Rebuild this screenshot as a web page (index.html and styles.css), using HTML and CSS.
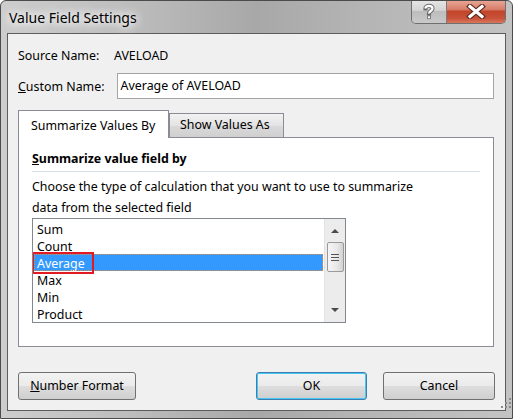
FILE: index.html
```html
<!DOCTYPE html>
<html>
<head>
<meta charset="utf-8">
<link rel="stylesheet" href="styles.css">
</head>
<body>
<div class="window">
  <div class="titlebar">
    <span class="title">Value Field Settings</span>
    <div class="caption-btns">
      <div class="cap-btn help">
        <svg width="14" height="17" viewBox="0 0 14 17"><path d="M3.5 5.5 C3.5 2 10.5 2 10.5 5.5 C10.5 8 7 8 7 10.5" fill="none" stroke="#6b6b6b" stroke-width="4.2" stroke-linecap="square"/><path d="M3.5 5.5 C3.5 2 10.5 2 10.5 5.5 C10.5 8 7 8 7 10.5" fill="none" stroke="#fff" stroke-width="2.2"/><rect x="5.2" y="12.5" width="3.6" height="3.6" fill="#6b6b6b"/><rect x="6" y="13.3" width="2" height="2" fill="#fff"/></svg>
      </div>
      <div class="cap-btn close">
        <svg width="20" height="15" viewBox="0 0 20 15"><path d="M4 2.5 L16 12.5 M16 2.5 L4 12.5" stroke="#5a2418" stroke-width="5.4" stroke-linecap="square"/><path d="M4 2.5 L16 12.5 M16 2.5 L4 12.5" stroke="#fff" stroke-width="3.2" stroke-linecap="square"/></svg>
      </div>
    </div>
  </div>
  <div class="client">
    <div class="row source">
      <span class="label">Source Name:</span>
      <span class="value">AVELOAD</span>
    </div>
    <div class="row custom">
      <span class="label"><u>C</u>ustom Name:</span>
      <div class="input">Average of AVELOAD</div>
    </div>
    <div class="tabs">
      <div class="tab active">Summarize Values By</div>
      <div class="tab">Show Values As</div>
    </div>
    <div class="panel">
      <div class="heading"><u>S</u>ummarize value field by</div>
      <p class="desc">Choose the type of calculation that you want to use to summarize<br>data from the selected field</p>
      <div class="listbox">
        <ul class="items">
          <li>Sum</li>
          <li>Count</li>
          <li class="selected">Average</li>
          <li>Max</li>
          <li>Min</li>
          <li>Product</li>
        </ul>
        <div class="scrollbar">
          <div class="arrow up"></div>
          <div class="thumb"><span></span><span></span><span></span></div>
          <div class="track"></div>
          <div class="arrow down"></div>
        </div>
        <div class="highlight"></div>
      </div>
    </div>
    <div class="buttons">
      <div class="btn numfmt"><u>N</u>umber Format</div>
      <div class="right-btns">
        <div class="btn ok">OK</div>
        <div class="btn cancel">Cancel</div>
      </div>
    </div>
  </div>
  <div class="grip">
    <svg width="10" height="10" viewBox="0 0 10 10"><g fill="#8a8a8a"><rect x="8" y="0" width="2" height="2"/><rect x="8" y="4" width="2" height="2"/><rect x="8" y="8" width="2" height="2"/><rect x="4" y="4" width="2" height="2"/><rect x="4" y="8" width="2" height="2"/><rect x="0" y="8" width="2" height="2"/></g></svg>
  </div>
</div>
</body>
</html>
```

FILE: styles.css
```css
* { box-sizing: border-box; }
html, body { margin: 0; padding: 0; background: #ffffff; }
body { font-family: "Noto Sans", "Open Sans", sans-serif; font-size: 12.4px; color: #000; }

.window {
  position: relative;
  width: 513px;
  height: 419px;
  border: 1px solid #4b4b4b;
  border-radius: 6px 6px 0 0;
  background: linear-gradient(90deg, #cdcdcd 0%, #bdbdbd 25%, #a8a8a8 50%, #b4b4b4 70%, #c3c3c3 100%);
  overflow: hidden;
}

.titlebar {
  height: 32px;
  display: flex;
  align-items: flex-start;
  justify-content: space-between;
  position: relative;
}
.title {
  margin: 8px 0 0 8px;
  font-size: 14px;
  line-height: 18px;
  color: #000;
  text-shadow: 0 0 8px #fff, 0 0 10px #fff, 0 0 14px #f2f2f2;
}
.caption-btns {
  display: flex;
  margin-right: 6px;
  margin-top: -1px;
  border: 1px solid #6f6f6f;
  border-top: none;
  border-radius: 0 0 5px 5px;
  overflow: hidden;
  height: 24px;
}
.cap-btn {
  display: flex;
  align-items: center;
  justify-content: center;
}
.cap-btn.help {
  width: 35px;
  background: linear-gradient(#e6e6e6 0%, #d4d4d4 45%, #bdbdbd 50%, #c9c9c9 100%);
  border-right: 1px solid #7a7a7a;
}
.cap-btn.close {
  width: 58px;
  background: linear-gradient(#e9a898 0%, #d9806b 40%, #c2452b 50%, #c8533a 80%, #d9765d 100%);
}

.client {
  margin: 0 6px 0 6px;
  height: 378px;
  border: 1px solid #5c5c5c;
  background: #f0f0f0;
  padding: 14px 11px 0 10px;
  display: flex;
  flex-direction: column;
}

.row { display: flex; align-items: center; }
.source { height: 16px; line-height: 16px; }
.source .label { width: 96px; }
.custom { margin-top: 9px; height: 26px; }
.custom .label { width: 99px; }
.input {
  width: 379px;
  height: 26px;
  border: 1px solid #a5a5a5;
  background: #fff;
  padding: 0 0 0 3px;
  line-height: 24px;
}

.tabs {
  margin-top: 11px;
  height: 27px;
  display: flex;
  align-items: flex-end;
  position: relative;
  z-index: 2;
}
.tab {
  height: 24px;
  line-height: 22px;
  border: 1px solid #898c95;
  border-bottom: none;
  padding: 0 10px;
  background: linear-gradient(#f2f2f2, #e3e3e3 50%, #d9d9d9 51%, #d0d0d0);
  width: 115px;
}
.tab.active {
  height: 28px;
  margin-bottom: -1px;
  line-height: 30px;
  width: 151px;
  padding-left: 12px;
  background: #fff;
}

.panel {
  height: 210px;
  border: 1px solid #898c95;
  background: #fff;
  padding: 13px 13px 0 13px;
  position: relative;
  z-index: 1;
}
.heading {
  font-weight: bold;
  line-height: 16px;
  padding-bottom: 4px;
  border-bottom: 1px solid #d5dfe5;
}
.desc {
  margin: 4px 0 0 0;
  line-height: 21px;
}
.listbox {
  position: relative;
  margin-top: 0;
  width: 314px;
  height: 105px;
  border: 1px solid #828790;
  display: flex;
  overflow: hidden;
}
.items {
  list-style: none;
  margin: 0;
  padding: 1px 1px 0 1px;
  flex: 1;
}
.items li {
  height: 17px;
  line-height: 19px;
  padding-left: 3px;
}
.items li.selected {
  background: #3399ff;
  color: #fff;
  outline: 1px dotted #e08a3c;
  outline-offset: -1px;
}
.scrollbar {
  width: 21px;
  background: #ececec;
  border-left: 1px solid #e2e2e2;
  display: flex;
  flex-direction: column;
  align-items: center;
}
.arrow {
  width: 0;
  height: 0;
  border-left: 4px solid transparent;
  border-right: 4px solid transparent;
}
.arrow.up { margin-top: 10px; border-bottom: 4px solid #4a4a4a; }
.arrow.down { margin-bottom: 10px; border-top: 4px solid #4a4a4a; }
.thumb {
  margin-top: 9px;
  width: 17px;
  height: 30px;
  border: 1px solid #9a9a9a;
  border-radius: 2px;
  background: linear-gradient(90deg, #f5f5f5, #e8e8e8 60%, #d2d2d2);
  display: flex;
  flex-direction: column;
  align-items: center;
  justify-content: center;
  gap: 2px;
}
.thumb span { display: block; width: 8px; height: 1px; background: #555; }
.track { flex: 1; }

.highlight {
  position: absolute;
  left: -1px;
  top: 33px;
  width: 62px;
  height: 22px;
  border: 2px solid #e21b23;
}

.buttons {
  margin-top: 25px;
  display: flex;
  justify-content: space-between;
}
.right-btns { display: flex; gap: 16px; margin-right: -1px; }
.btn {
  height: 28px;
  border: 1px solid #707070;
  border-radius: 3px;
  background: linear-gradient(#f2f2f2 0%, #ebebeb 48%, #dddddd 52%, #cfcfcf 100%);
  text-align: center;
  line-height: 26px;
}
.btn.numfmt { width: 118px; }
.btn.ok {
  width: 111px;
  border-color: #3c7fb1;
  box-shadow: inset 0 0 0 1px #48c5f2;
}
.btn.cancel { width: 112px; }

.grip {
  position: absolute;
  right: 1px;
  bottom: 10px;
  line-height: 0;
}
```
